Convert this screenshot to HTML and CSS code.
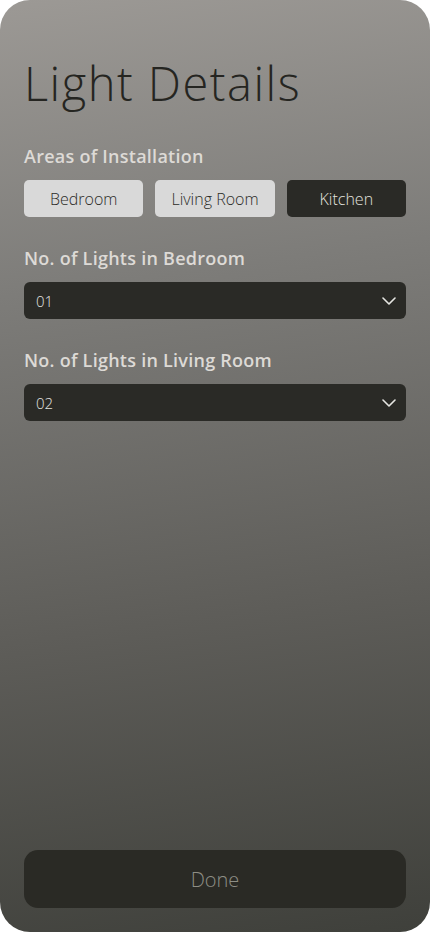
FILE: index.html
```html
<!DOCTYPE html>
<html lang="en">
<head>
<meta charset="utf-8">
<title>Light Details</title>
<link rel="stylesheet" href="styles.css">
</head>
<body>
<div class="screen">
  <h1 class="title">Light Details</h1>

  <section class="group">
    <h2 class="label">Areas of Installation</h2>
    <div class="chips">
      <button class="chip chip-light">Bedroom</button>
      <button class="chip chip-light">Living Room</button>
      <button class="chip chip-dark">Kitchen</button>
    </div>
  </section>

  <section class="group">
    <h2 class="label">No. of Lights in Bedroom</h2>
    <div class="select">
      <span class="select-value">01</span>
      <svg class="chevron" width="14" height="8" viewBox="0 0 14 8"><path d="M1 1 L7 7 L13 1" fill="none" stroke="#e6e6e2" stroke-width="1.6" stroke-linecap="round" stroke-linejoin="round"/></svg>
    </div>
  </section>

  <section class="group">
    <h2 class="label">No. of Lights in Living Room</h2>
    <div class="select">
      <span class="select-value">02</span>
      <svg class="chevron" width="14" height="8" viewBox="0 0 14 8"><path d="M1 1 L7 7 L13 1" fill="none" stroke="#e6e6e2" stroke-width="1.6" stroke-linecap="round" stroke-linejoin="round"/></svg>
    </div>
  </section>

  <div class="spacer"></div>

  <button class="done">Done</button>
</div>
</body>
</html>
```

FILE: styles.css
```css
html, body {
  margin: 0;
  padding: 0;
  background: #ffffff;
}
body {
  font-family: "Open Sans", "Lato", sans-serif;
}
.screen {
  box-sizing: border-box;
  width: 430px;
  height: 932px;
  border-radius: 30px;
  overflow: hidden;
  background: linear-gradient(172deg, #9c9995 0%, #7d7c79 30%, #5e5d59 65%, #3f403b 100%);
  padding: 51px 24px 24px 24px;
  display: flex;
  flex-direction: column;
}
.title {
  margin: 0 0 30px 0;
  font-weight: 300;
  font-size: 47px;
  line-height: 64px;
  color: #252521;
  letter-spacing: 1.5px;
}
.group {
  margin-bottom: 30px;
}
.label {
  margin: 0 0 13px 0;
  font-size: 18px;
  line-height: 22px;
  font-weight: 600;
  color: #dddad6;
  letter-spacing: 0.25px;
}
.chips {
  display: grid;
  grid-template-columns: repeat(3, 1fr);
  gap: 12px;
}
.chip {
  height: 37px;
  border: none;
  border-radius: 5px;
  font-family: inherit;
  font-size: 16px;
  font-weight: 300;
  padding: 0;
}
.chip-light {
  background: #d9d9d9;
  color: #2b2b27;
}
.chip-dark {
  background: #2a2a26;
  color: #e2e2df;
}
.select {
  height: 37px;
  background: #2a2a26;
  border-radius: 6px;
  display: flex;
  align-items: center;
  justify-content: space-between;
  padding: 0 10px 0 12px;
}
.select-value {
  color: #e3e3e0;
  font-size: 15px;
  font-weight: 300;
}
.chevron {
  display: block;
}
.spacer {
  flex: 1;
}
.done {
  height: 58px;
  border: none;
  border-radius: 14px;
  background: #2a2a25;
  color: #8e8e85;
  font-family: inherit;
  font-size: 20px;
  font-weight: 300;
}
```
